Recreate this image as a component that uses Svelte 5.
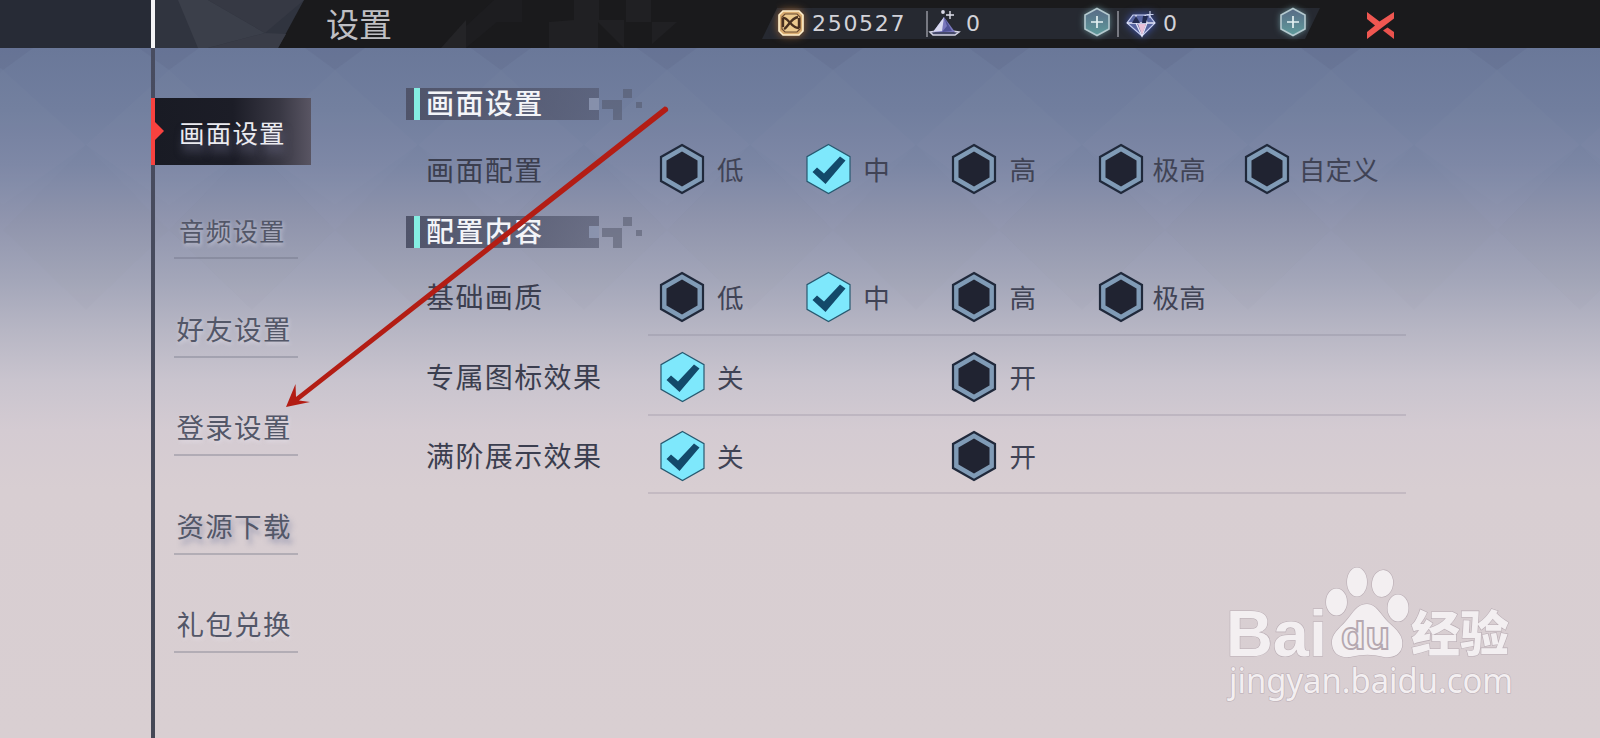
<script>
    let tabs = $state([
        { name: "画面设置" },
        { name: "音频设置", narrow: true },
        { name: "好友设置" },
        { name: "登录设置" },
        { name: "资源下载", shadow: true },
        { name: "礼包兑换" },
    ]);
    let activeTab = $state("画面设置");

    let quality = $state([
        {
            title: "画面设置",
            rows: [
                {
                    name: "画面配置",
                    options: ["低", "中", "高", "极高", "自定义"],
                    value: "中",
                },
            ],
        },
        {
            title: "配置内容",
            rows: [
                { name: "基础画质", options: ["低", "中", "高", "极高"], value: "中" },
                { name: "专属图标效果", options: ["关", "", "开"], value: "关" },
                { name: "满阶展示效果", options: ["关", "", "开"], value: "关" },
            ],
        },
    ]);

    // columns of the faint diamond pattern behind the page
    const diamonds = [0, 1, 2, 3, 4, 5, 6, 7, 8, 9, 10];
</script>

<svelte:head>
    <title>设置</title>
</svelte:head>

{#snippet plus()}
    <svg class="plus" width="34" height="36" viewBox="-17 -18 34 36">
        <path d="M0-13.5 12-7V7L0 13.5-12 7V-7Z" fill="url(#plusFill)" stroke="#b4c9cf" stroke-width="1.6" />
        <path d="M-6 0H6M0-6V6" stroke="#e4f1f2" stroke-width="1.7" />
    </svg>
{/snippet}

<div class="page">
    <svg class="backdrop" width="1600" height="738" viewBox="0 0 1600 738">
        <defs>
            <linearGradient id="plusFill" x1="0" y1="0" x2="0" y2="1">
                <stop offset="0" stop-color="#586a85" />
                <stop offset="1" stop-color="#5f9c9c" />
            </linearGradient>
        </defs>
        {#each diamonds as i (i)}
            <path d="M{i * 166 - 27} 48h60l-30 22z" fill="#3c4668" opacity=".08" />
            <path d="M{i * 166 - 80} 145l83-75 83 75-83 60z" fill="#fff" opacity=".014" />
            <path d="M{i * 166 + 3} 230l83-85 83 85-83 80z" fill="#3c4668" opacity=".012" />
        {/each}
    </svg>

    <header>
        <div class="corner"></div>
        <div class="brand">
            <svg width="149" height="48" viewBox="0 0 149 48">
                <path d="M0 0H149L123 48H0Z" fill="#30343f" />
                <path d="M23 0H53L110 33 53 48H43Z" fill="#3b3f4a" />
                <path d="M53 0H149L110 33Z" fill="#363944" />
                <path d="M110 33 131 34 123 48H53Z" fill="#393c47" />
            </svg>
        </div>
        <h1>设置</h1>
        <svg class="facets" width="371" height="48" viewBox="0 0 371 48">
            <path d="M50 48 75 20V48Z" fill="#242427" />
            <path d="M75 26 103 0H131V22H106L75 48Z" fill="#1d1d20" />
            <path d="M183 20V0H208V20H233V48L207 22V48H158V22Z" fill="#202023" />
            <path d="M235 0H260V22H286L261 44V22H235Z" fill="#202023" />
        </svg>
        <div class="wallet">
            <div class="coins">
                <svg width="36" height="40" viewBox="-18 -20 36 40">
                    <path d="M-8-12H8L12-8V8L8 12H-8L-12 8V-8Z" fill="#d9ac70" stroke="#fff0cd" stroke-width="1.6" />
                    <path d="M-6-9H6L9-6V6L6 9H-6L-9 6V-6Z" fill="#edca8e" stroke="#6b4a30" stroke-width="1.2" />
                    <path d="M-8-5C-4-7 1 6 8 5M-7 6C-3 4 0-5 7-6M-8-5V4M8-5V5" fill="none" stroke="#49301f" stroke-width="2.4" />
                </svg>
                <span>250527</span>
            </div>
            <div class="crystals">
                <svg width="36" height="40" viewBox="-18 -20 36 40">
                    <path d="M-14 9-7 8H8L15 9 11 12H-11Z" fill="#45496a" stroke="#d4d4e4" stroke-width="1.5" />
                    <path d="M0-6 11 9H-11Z" fill="#7977bc" />
                    <path d="M0-6-11 9-2 8Z" fill="#d8d9f0" />
                    <path d="M0-6 3 3-2 9 8 8Z" fill="#4f5296" />
                    <path d="M6-12V-4M2-8H10" stroke="#e0e0ec" stroke-width="1.4" />
                    <circle cx="-1" cy="-11" r="1.9" fill="#dadae8" />
                </svg>
                <span>0</span>
                {@render plus()}
            </div>
            <div class="gems">
                <svg width="36" height="40" viewBox="-18 -20 36 40">
                    <path d="M-8-8H8L14 0 1 13-14 0Z" fill="#5764a0" stroke="#c7d0f2" stroke-width="1.2" />
                    <path d="M-14 0H14M-5-8-5 0 1 13 6 0 4-8" fill="none" stroke="#e3e5f7" stroke-width="1.3" />
                    <path d="M-5-7-1 0H-9Z" fill="#242c52" />
                    <path d="M2-7H7L5 0H1Z" fill="#20294e" />
                    <path d="M-3 1H5L1 12Z" fill="#e9c1d9" />
                    <path d="M9-12V-5M5.5-8.5H12.5" stroke="#c9d0ea" stroke-width="1.2" />
                </svg>
                <span>0</span>
                {@render plus()}
            </div>
        </div>
        <button class="close" aria-label="关闭">
            <svg width="27" height="27" viewBox="0 0 27 27">
                <path d="M0 0 12.500 9.500 27 0V6.500L0 27V20L8 13.500 0 7Z" fill="#ef5751" />
                <path d="M20.500 15.500 27 20V27L16 18.500Z" fill="#e9524d" />
            </svg>
        </button>
    </header>

    <main>
        <nav>
            {#each tabs as tab (tab.name)}
                <button
                    class="tab"
                    class:active={tab.name === activeTab}
                    class:narrow={tab.narrow}
                    class:shadow={tab.shadow}
                    onclick={() => (activeTab = tab.name)}
                >
                    <span>{tab.name}</span>
                </button>
            {/each}
        </nav>

        <div class="settings">
            {#each quality as section, s (section.title)}
                <section class:lined={s > 0}>
                    <h2>
                        <span>{section.title}</span>
                        <svg width="56" height="32" viewBox="0 0 56 32">
                            <path d="M0 10H10V22H0Z" fill="#98a2bf" opacity=".7" />
                            <path d="M13 12H33V32H24V21H13ZM34 1H43V10H34ZM47 14H53V20H47Z" fill="#505466" opacity=".5" />
                        </svg>
                    </h2>
                    {#each section.rows as row (row.name)}
                        <div class="row">
                            <div class="name">{row.name}</div>
                            <div class="options">
                                {#each row.options as option}
                                    {#if option}
                                        <button
                                            class="option"
                                            class:long={option.length > 1}
                                            onclick={() => (row.value = option)}
                                        >
                                            <svg width="46" height="52" viewBox="-23 -26 46 52">
                                                {#if row.value === option}
                                                    <path d="M.5-24.500 22-12.300V12.300L.5 24.500-21-12.300" fill="none" />
                                                    <path d="M.5-24.500 22-12.300V12.300L.5 24.500-21 12.300V-12.300Z" fill="#7ee8fc" stroke="#275970" stroke-width="1.2" />
                                                    <path d="M-15.500 3-11-1.500-4 4.500 12-12.500 17.500-8.500-2.500 15Z" fill="#13496a" />
                                                {:else}
                                                    <path d="M0-24 21-12V12L0 24-21 12V-12Z" fill="#809bb6" stroke="#20293b" stroke-width="2.2" />
                                                    <path d="M0-17.500 15.500-8.500V8.500L0 17.500-15.500 8.500V-8.500Z" fill="#202331" />
                                                {/if}
                                            </svg>
                                            <span>{option}</span>
                                        </button>
                                    {:else}
                                        <div></div>
                                    {/if}
                                {/each}
                            </div>
                        </div>
                    {/each}
                </section>
            {/each}
        </div>
    </main>

    <svg class="arrow" width="400" height="320" viewBox="276 98 400 320">
        <path d="M664.500 106.500Q669 107 668 111L299 400.500 310 402 286 407 295.500 384 296 397Z" fill="#b31d14" />
    </svg>

    <svg class="watermark" width="310" height="150" viewBox="1215 560 310 150">
        <g fill="#f3eff1" stroke="#b9adb4" stroke-width="1.2" paint-order="stroke">
            <text class="latin" x="1226" y="655.500" font-size="65" textLength="101" lengthAdjust="spacingAndGlyphs">Bai</text>
            <ellipse cx="1336.500" cy="602" rx="10.500" ry="13.500" />
            <ellipse cx="1357" cy="582" rx="10" ry="14.500" />
            <ellipse cx="1382.500" cy="583.500" rx="10.500" ry="13.500" transform="rotate(8 1382.500 583.500)" />
            <ellipse cx="1398" cy="608" rx="10.500" ry="13.500" />
            <path d="M1367 604C1376 604 1381 615 1388 622 1397 630 1404 636 1402 647 1400 655 1393 658 1384 657 1370 654 1365 654 1350 657 1340 658 1333 654 1332 644 1331 634 1339 629 1346 621 1353 613 1357 604 1367 604Z" />
            <text class="cjk" x="1411" y="651" font-size="48" textLength="98" lengthAdjust="spacingAndGlyphs">经验</text>
            <text class="url" x="1229" y="692.500" font-size="34" textLength="284" lengthAdjust="spacingAndGlyphs">jingyan.baidu.com</text>
        </g>
        <text class="du" x="1341" y="648.500" font-size="39" textLength="49" lengthAdjust="spacingAndGlyphs">du</text>
    </svg>
</div>

<style>
    :global(body) {
        margin: 0;
        overflow: hidden;
    }
    .page {
        position: relative;
        width: 1600px;
        height: 738px;
        overflow: hidden;
        font-family: "Noto Sans CJK SC", sans-serif;
        color: #404355;
        background: linear-gradient(
            #6a7899 48px,
            #717e9e 110px,
            #7c87a5 165px,
            #9095ae 220px,
            #a3a6b9 280px,
            #b7b6c4 330px,
            #c9c4ce 380px,
            #d4cbd2 430px,
            #d8ced2 490px,
            #d9cfd2 738px
        );
    }
    button {
        padding: 0;
        border: 0;
        background: none;
        color: inherit;
        font: inherit;
        cursor: pointer;
    }
    svg {
        flex: none;
        overflow: visible;
    }
    .backdrop {
        position: absolute;
        left: 0;
        top: 0;
        overflow: hidden;
    }
    header {
        position: relative;
        display: flex;
        height: 48px;
        background: #1a1a1c;
    }
    .corner {
        width: 151px;
        background: #272b36;
        border-right: 4px solid #f4f4f6;
    }
    .brand {
        width: 149px;
    }
    h1 {
        width: 94px;
        margin: 0;
        padding-left: 22px;
        font-size: 33px;
        font-weight: 400;
        line-height: 46px;
        color: #bfbfc3;
    }
    .facets {
        margin-left: -29px;
    }
    .wallet {
        display: grid;
        grid-template-columns: 164px 191px 203px;
        grid-template-rows: 31px;
        width: 558px;
        height: 31px;
        margin-top: 8px;
        background: #262931;
        clip-path: polygon(15px 0, 13px -8px, 545px -8px, 558px 0, 543px 100%, 543px 40px, 0 40px, 0 100%);
    }
    .wallet > div {
        display: flex;
        align-items: center;
        font: 22px/30px "DejaVu Sans", sans-serif;
        color: #d2d2d8;
    }
    .wallet svg {
        margin-top: -2px;
    }
    .wallet .coins {
        padding-left: 11px;
    }
    .coins svg {
        filter: drop-shadow(0 0 4px #a06837);
    }
    .coins span {
        margin-left: 3px;
        letter-spacing: 1.7px;
    }
    .crystals,
    .gems {
        background: linear-gradient(#777982, #777982) 0 3px / 2px 26px no-repeat;
    }
    .crystals span {
        width: 114px;
        margin-left: 4px;
    }
    .gems {
        padding-left: 6px;
    }
    .gems span {
        width: 113px;
        margin-left: 4px;
    }
    .gems svg:first-child {
        filter: drop-shadow(0 0 4px #4055b0);
    }
    .wallet .plus {
        margin-top: -3px;
        filter: drop-shadow(0 0 3px #5f8289);
    }
    .close {
        display: flex;
        margin: 12px 0 0 47px;
        height: 27px;
    }
    main {
        position: relative;
        display: flex;
        height: 690px;
    }
    nav {
        display: flex;
        flex-direction: column;
        gap: 31.4px;
        width: 160px;
        margin-left: 151px;
        padding-top: 50px;
        background: linear-gradient(#484c60, #454856) 0 0 / 4px 100% no-repeat;
    }
    .tab {
        position: relative;
        height: 67px;
        margin: 0 13px 0 23px;
        font-size: 27.5px;
        line-height: 65px;
        letter-spacing: 1.3px;
        text-align: left;
        white-space: nowrap;
        color: #535768;
    }
    .tab span {
        padding-left: 2.5px;
        text-shadow: 1px 2px 4px rgba(235, 232, 242, 0.6);
    }
    .tab:not(.active)::after {
        content: "";
        position: absolute;
        left: 0;
        right: 0;
        bottom: 4px;
        height: 2px;
        background: rgba(100, 102, 122, 0.32);
    }
    .tab.narrow,
    .tab.active {
        font-size: 25.5px;
        letter-spacing: 1.2px;
    }
    .tab.active {
        line-height: 64px;
    }
    .tab.narrow span {
        padding-left: 5px;
    }
    .tab.shadow span {
        text-shadow: 3px 5px 5px rgba(100, 110, 150, 0.5);
    }
    .tab.active {
        margin: 0;
        padding-left: 24px;
        color: #ebebf0;
        border-left: 4px solid #f8423f;
        background: linear-gradient(90deg, #191b24, #1c1d27 50%, #393844 80%, #595563);
    }
    .tab.active span {
        padding: 0;
        text-shadow: 2px 8px 8px rgba(120, 120, 150, 0.6);
    }
    .tab.active::after {
        content: "";
        position: absolute;
        left: 0;
        top: 24px;
        border: solid transparent;
        border-width: 9px 0 9px 9px;
        border-left-color: #f8423f;
    }
    .settings {
        width: 1000px;
        margin-left: 95px;
        padding-top: 40px;
    }
    h2 {
        display: flex;
        height: 32px;
        margin: 0;
        font-size: 28px;
        font-weight: 500;
        line-height: 28px;
        letter-spacing: 1.4px;
        color: #f3f4f8;
    }
    h2 span {
        box-sizing: border-box;
        width: 193px;
        padding-left: 20px;
        background:
            linear-gradient(#85eee2, #85eee2) 8px 0 / 6px 32px no-repeat,
            linear-gradient(90deg, #50546a, rgba(80, 84, 106, 0.6));
    }
    h2 svg {
        margin-left: -10px;
    }
    .row {
        display: flex;
        box-sizing: border-box;
        height: 96px;
        padding-top: 2px;
    }
    .name {
        width: 222px;
        padding-left: 20px;
        align-self: center;
        font-size: 28px;
        line-height: 36px;
        letter-spacing: 1.4px;
        color: #3b3e4f;
    }
    .options {
        display: grid;
        grid-template-columns: repeat(5, 146.2px);
        width: 758px;
        box-sizing: border-box;
        padding-left: 11px;
    }
    .lined .row {
        height: 80px;
        padding-top: 0;
    }
    .lined .row:nth-child(2) {
        height: 88px;
    }
    .lined .row:nth-child(2) .name {
        padding-top: 8px;
    }
    .lined .row:nth-child(2) .options {
        padding-top: 12px;
    }
    .lined .row:last-child {
        height: 78px;
    }
    .lined .options {
        padding-top: 3px;
        border-bottom: 2px solid rgba(105, 100, 120, 0.18);
    }
    .option {
        display: flex;
        align-items: center;
        gap: 12px;
        white-space: nowrap;
    }
    .option span {
        font-size: 26.5px;
        letter-spacing: 0.3px;
        line-height: 36px;
    }
    .option.long {
        gap: 9px;
    }
    .arrow {
        position: absolute;
        left: 276px;
        top: 98px;
        pointer-events: none;
    }
    .watermark {
        position: absolute;
        left: 1215px;
        top: 560px;
        pointer-events: none;
    }
    .latin {
        font-family: "Liberation Sans", sans-serif;
        font-weight: 700;
    }
    .cjk {
        font-weight: 900;
    }
    .url {
        font-family: "Noto Sans", sans-serif;
    }
    .du {
        font-family: "Liberation Sans", sans-serif;
        font-weight: 700;
        fill: #f3eff1;
        stroke: #b5a8b0;
        stroke-width: 1.8;
    }
</style>
